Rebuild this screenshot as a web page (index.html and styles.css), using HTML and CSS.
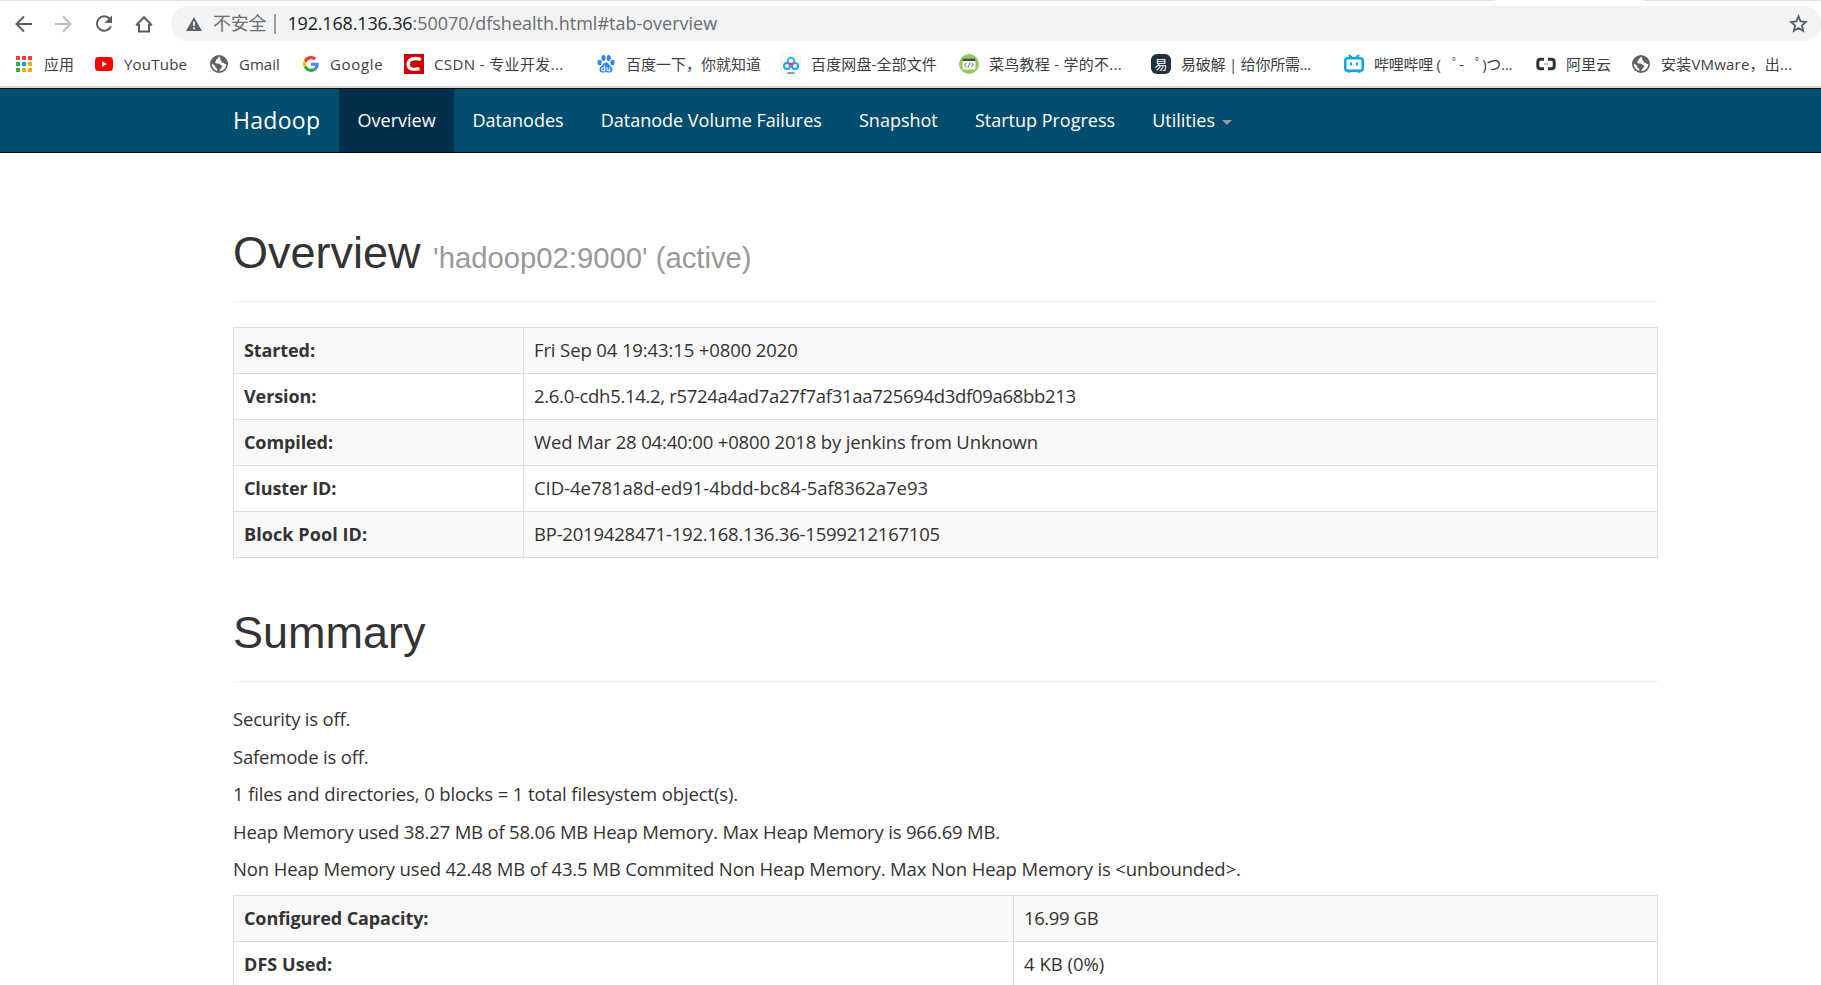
FILE: index.html
```html
<!DOCTYPE html>
<html lang="zh-CN">
<head>
<meta charset="utf-8">
<title>Namenode information</title>
<link rel="stylesheet" href="styles.css">
</head>
<body>
<header class="browser">
  <div class="tab-edge"><i class="edge-left"></i><i class="edge-right"></i></div>
  <div class="toolbar">
    <div class="controls">
      <svg width="20" height="20" viewBox="0 0 20 20"><path d="M18 10H2.500M10 2.500 2.500 10l7.500 7.500" fill="none" stroke="#5a5d61" stroke-width="2"/></svg>
      <svg width="20" height="20" viewBox="0 0 20 20"><path d="M1 10h15.500M9 2.500 16.500 10 9 17.500" fill="none" stroke="#b9bbbe" stroke-width="2"/></svg>
      <svg width="20" height="20" viewBox="0 0 20 20"><path d="M15.700 5A7.200 7.200 0 1 0 16.800 12.300" fill="none" stroke="#5a5d61" stroke-width="2"/><path d="M18 1.500V9h-7.500z" fill="#5a5d61"/></svg>
      <svg width="20" height="20" viewBox="0 0 20 20"><path d="M5 10v7.500h10V10M2.200 11.200 10 3.200l7.800 8M2 10.800h3M15 10.800h3" fill="none" stroke="#5a5d61" stroke-width="2"/></svg>
    </div>
    <div class="omnibox">
      <svg class="warn" width="16" height="14" viewBox="0 0 16 14"><path d="M8 0 16 14H0z" fill="#5f6368"/><path d="M8 4.500v4.500M8 10.300v1.900" stroke="#f1f3f4" stroke-width="1.800"/></svg>
      <span class="insecure">不安全</span><i class="sep"></i>
      <span class="url"><span class="host">192.168.136.36</span>:50070/dfshealth.html#tab-overview</span>
      <svg class="star" width="19" height="19" viewBox="0 0 20 20"><path d="m10 2.500 2.200 5.300 5.700.500-4.300 3.800 1.300 5.600-4.900-3-4.900 3 1.300-5.600-4.300-3.800 5.700-.500z" fill="none" stroke="#5a5d61" stroke-width="1.900"/></svg>
    </div>
  </div>
  <nav class="bookmarks">
    <a><svg width="18" height="18" viewBox="0 0 18 18"><path d="M1 1h4v4H1zM7 1h4v4H7zM13 1h4v4h-4z" fill="#f44336"/><path d="M1 7h4v4H1zM1 13h4v4H1z" fill="#34a853"/><path d="M7 7h4v4H7z" fill="#2196f3"/><path d="M7 13h4v4H7zM13 7h4v4h-4zM13 13h4v4h-4z" fill="#fba900"/></svg><span>应用</span></a>
    <a><svg width="18" height="18" viewBox="0 0 18 18"><rect y="2" width="18" height="14" rx="3.500" fill="#f00"/><path d="m7 6 5 3-5 3z" fill="#fff"/></svg><span class="yt">YouTube</span></a>
    <a><svg width="18" height="18" viewBox="0 0 18 18"><circle cx="9" cy="9" r="9" fill="#5f6368"/><path d="M9.500 1.800c-1.700.700-1.400 1.900-2.700 2.500-.900.500-.500 1.600-1.200 2.200-.800.600-.300 1.900.900 2 1.500.100 2.700-.200 3.400.800.600.900 2.300.600 2.400 1.800.100 1.400-1.500 1.700-1.800 2.900-.200.900-.900 1.600-1.600 2.300 4.400-.200 7.400-3.400 7.300-7.300-.800.300-1.500.100-1.900-.600-.500-.900-1.500-.300-2.200-.900-.800-.700-.300-1.900-1.300-2.300-.900-.500-.400-2.200-1.300-3.400zM1.800 8.500c-.100 3.800 2.400 6.700 5.500 7.400.200-1.400-.100-2.300-1.300-2.800-1-.500-.300-2-1.300-2.700z" fill="#fff"/></svg><span>Gmail</span></a>
    <a><svg width="16" height="16" viewBox="0 0 48 48"><path fill="#ea4335" d="M24 9.500c3.500 0 6.700 1.200 9.200 3.600l6.900-6.900C35.900 2.400 30.500 0 24 0 14.600 0 6.500 5.400 2.600 13.200l8 6.200C12.400 13.700 17.700 9.500 24 9.500z"/><path fill="#4285f4" d="M47 24.500c0-1.600-.200-3.100-.400-4.500H24v9h12.900c-.600 3-2.300 5.500-4.800 7.200l7.700 6C44.400 38 47 31.800 47 24.500z"/><path fill="#fbbc05" d="M10.500 28.600c-.500-1.500-.800-3-.800-4.600s.300-3.100.800-4.600l-8-6.200C.900 16.500 0 20.100 0 24s.9 7.500 2.600 10.800z"/><path fill="#34a853" d="M24 48c6.500 0 11.900-2.100 15.900-5.800l-7.700-6c-2.200 1.500-4.900 2.300-8.200 2.300-6.300 0-11.600-4.200-13.500-9.900l-8 6.200C6.500 42.600 14.600 48 24 48z"/></svg><span class="gg">Google</span></a>
    <a><svg width="20" height="20" viewBox="0 0 20 20"><path d="M0 0h20v20H0z" fill="#c00"/><path d="M17 5.500C11 3.500 4.500 4.500 4.200 10.200 4 15.500 9.500 16.200 15.500 14.700" fill="none" stroke="#fff" stroke-width="3.400"/></svg><span class="csdn">CSDN - 专业开发...</span></a>
    <a><svg width="18" height="18" viewBox="0 0 18 18" fill="#2f86f6"><ellipse cx="6.500" cy="3" rx="2.100" ry="2.900"/><ellipse cx="11.700" cy="3" rx="2.100" ry="2.900"/><ellipse cx="2.600" cy="7.500" rx="2.100" ry="2.700"/><ellipse cx="15.500" cy="7.500" rx="2.100" ry="2.700"/><path d="M9 7.500c2 0 2.600 1.700 4 3s2.700 2.300 2.500 4.200c-.200 2.100-1.900 3-3.700 2.800-1.900-.300-3.700-.300-5.600 0-1.800.200-3.500-.700-3.700-2.800-.200-1.900 1.100-2.900 2.500-4.200s2-3 4-3z"/><path d="M7.700 10.500v5.200H6.200a1.300 1.300 0 0 1 0-2.900h1.500M10 12.300v2.200q0 1.200 1.200 1.200h1.500v-3.400" fill="none" stroke="#fff" stroke-width="1.100"/></svg><span>百度一下，你就知道</span></a>
    <a><svg width="20" height="20" viewBox="0 0 20 20"><rect x=".5" y=".5" width="19" height="19" rx="2" fill="#fff" stroke="#f1f1f3"/><g fill="none" stroke-width="2"><circle cx="6" cy="12" r="3" stroke="#06a7ff"/><circle cx="14" cy="12" r="3" stroke="#06a7ff"/><circle cx="10" cy="7" r="3.300" stroke="#27b4fb"/><path d="M7 8.500q.600 2 3 1.800 2.400.200 3-1.800M8 11l2-1.500 2 1.500" stroke="#f0455d"/></g><path d="M6.500 19H10" stroke="#f0455d" stroke-width="1.600"/><path d="M10 19h3.500" stroke="#06a7ff" stroke-width="1.600"/></svg><span class="pan">百度网盘-全部文件</span></a>
    <a><svg width="20" height="20" viewBox="0 0 20 20"><circle cx="10" cy="10" r="10" fill="#96c853"/><path d="M3.500 4.500h13v11h-13z" fill="#f3f5ea"/><path d="M3.500 4.500h13V7h-13z" fill="#3c4e56"/><path d="m7.500 9-2 2 2 2M12.500 9l2 2-2 2M11 8.500l-2 5" fill="none" stroke="#6f7a78"/></svg><span class="cn">菜鸟教程 - 学的不...</span></a>
    <a><svg width="20" height="20" viewBox="0 0 20 20"><rect width="20" height="20" rx="6" fill="#203040"/><text x="10" y="14.800" text-anchor="middle" class="yi">易</text></svg><span class="po">易破解 | 给你所需...</span></a>
    <a><svg width="20" height="20" viewBox="0 0 20 20" fill="none" stroke="#0ba5e0"><rect x="1.300" y="4.300" width="17.400" height="12.400" rx="2.500" stroke-width="2.500"/><path d="m5 1 3 3M15 1l-3 3" stroke-width="2.200"/><path d="M7 8.500v3M13 8.500v3" stroke-width="2"/><path d="M3.500 17.500h3M13.500 17.500h3" stroke-width="2.500"/></svg><span class="bili">哔哩哔哩 ( <span class="ring">ﾟ</span>- <span class="ring">ﾟ</span>)つ...</span></a>
    <a><svg width="20" height="20" viewBox="0 0 20 20"><path d="M8 5.200H4.500Q1.800 5.200 1.800 8v4q0 2.800 2.700 2.800H8M12 5.200h3.500q2.700 0 2.700 2.800v4q0 2.800-2.700 2.800H12" fill="none" stroke="#333" stroke-width="3"/><path d="M8 10h4" stroke="#aaa" stroke-width="1.500"/></svg><span>阿里云</span></a>
    <a><svg width="18" height="18" viewBox="0 0 18 18"><circle cx="9" cy="9" r="9" fill="#5f6368"/><path d="M9.500 1.800c-1.700.700-1.400 1.900-2.700 2.500-.900.500-.500 1.600-1.200 2.200-.800.600-.300 1.900.900 2 1.500.100 2.700-.200 3.400.800.600.900 2.300.600 2.400 1.800.100 1.400-1.500 1.700-1.800 2.900-.200.900-.900 1.600-1.600 2.300 4.400-.200 7.400-3.400 7.300-7.300-.800.300-1.500.100-1.900-.600-.500-.900-1.500-.300-2.200-.900-.800-.700-.300-1.900-1.300-2.300-.900-.500-.400-2.200-1.300-3.400zM1.800 8.500c-.100 3.800 2.400 6.700 5.500 7.400.200-1.400-.100-2.300-1.300-2.800-1-.500-.300-2-1.300-2.700z" fill="#fff"/></svg><span class="vm">安装VMware，出...</span></a>
  </nav>
</header>
<nav class="navbar">
  <a class="brand">Hadoop</a>
  <a class="active">Overview</a>
  <a>Datanodes</a>
  <a>Datanode Volume Failures</a>
  <a>Snapshot</a>
  <a>Startup Progress</a>
  <a>Utilities<i class="caret"></i></a>
</nav>
<main class="container">
  <h1>Overview <small>'hadoop02:9000' (active)</small></h1>
  <table class="info">
    <tr><th>Started:</th><td class="started">Fri Sep 04 19:43:15 +0800 2020</td></tr>
    <tr><th>Version:</th><td class="version">2.6.0-cdh5.14.2, r5724a4ad7a27f7af31aa725694d3df09a68bb213</td></tr>
    <tr><th>Compiled:</th><td class="compiled">Wed Mar 28 04:40:00 +0800 2018 by jenkins from Unknown</td></tr>
    <tr><th>Cluster ID:</th><td class="cluster">CID-4e781a8d-ed91-4bdd-bc84-5af8362a7e93</td></tr>
    <tr><th class="wide">Block Pool ID:</th><td class="pool">BP-2019428471-192.168.136.36-1599212167105</td></tr>
  </table>
  <h1>Summary</h1>
  <section class="facts">
    <p class="status">Security is off.</p>
    <p class="status">Safemode is off.</p>
    <p class="files">1 files and directories, 0 blocks = 1 total filesystem object(s).</p>
    <p class="heap">Heap Memory used 38.27 MB of 58.06 MB Heap Memory. Max Heap Memory is 966.69 MB.</p>
    <p class="nonheap">Non Heap Memory used 42.48 MB of 43.5 MB Commited Non Heap Memory. Max Non Heap Memory is &lt;unbounded&gt;.</p>
  </section>
  <table class="capacity">
    <tr><th>Configured Capacity:</th><td class="total">16.99 GB</td></tr>
    <tr><th class="wide">DFS Used:</th><td>4 KB (0%)</td></tr>
  </table>
</main>
</body>
</html>
```
FILE: styles.css
```css
* { box-sizing: border-box; }
body {
  margin: 0;
  height: 985px;
  overflow: hidden;
  background: #fff;
  color: #333;
  font: 18.5px/25px "Open Sans", "Noto Sans CJK SC", sans-serif;
}
svg { flex: none; display: block; }

/* Browser chrome */
.browser { height: 88px; border-bottom: 2px solid #d5d7da; }
.tab-edge { display: flex; justify-content: space-between; height: 6px; }
.tab-edge i { height: 1px; background: #dee1e6; }
.edge-left { width: 1495px; }
.edge-right { width: 178px; }
.toolbar { display: flex; height: 35px; }
.controls { width: 171px; display: flex; gap: 20px; padding: 8px 14px; }
.omnibox {
  flex: 1;
  display: flex;
  align-items: center;
  padding: 0 13px 0 15px;
  border-radius: 18px;
  background: #f1f3f4;
  font-size: 18px;
  color: #6a6d71;
  white-space: nowrap;
}
.insecure { margin-left: 11px; letter-spacing: -.2px; }
.sep { width: 2px; height: 20px; margin: 0 11px 0 8px; background: #9a9da1; }
.host { color: #202124; letter-spacing: -.17px; }
.star { margin-left: auto; }
.bookmarks {
  display: grid;
  grid-template-columns: 80px 115px 93px 101px 193px 184px 178px 192px 193px 192px 96px 1fr;
  padding: 10px 0 0 15px;
  font-size: 15px;
  color: #3c4043;
  white-space: nowrap;
}
.bookmarks a { display: flex; align-items: center; gap: 11px; }
.bookmarks a > span { padding-top: 1px; }
.bookmarks svg[width="20"] { margin-right: -1px; }
.yt { letter-spacing: .22px; }
.gg { letter-spacing: .65px; }
.csdn { letter-spacing: .38px; }
.pan { letter-spacing: .13px; }
.cn { letter-spacing: .27px; }
.po { letter-spacing: -.22px; }
.bili { letter-spacing: -.26px; }
.ring { padding-left: 7.5px; }
.vm { letter-spacing: .2px; }
.yi { font: 13px "Noto Sans CJK SC", sans-serif; fill: #fff; }

/* Site navigation */
.navbar {
  display: flex;
  height: 65px;
  padding-left: 233px;
  border: solid #080808;
  border-width: 1px 0;
  background: #004d6e;
  color: #fff;
  font-size: 18px;
}
.navbar a { padding: 19px 18.55px 0; }
.navbar .brand { width: 106px; padding: 19px 0 0; font-size: 23px; letter-spacing: .3px; }
.navbar .active { width: 115px; background: #002e4b; }
.caret {
  display: inline-block;
  margin-left: 7px;
  vertical-align: middle;
  border: 5px solid transparent;
  border-top-color: #999;
  border-bottom: 0;
}

/* Page content */
.container { width: 1425px; margin-left: 233px; padding-top: 75px; }
h1 {
  height: 74px;
  margin: 0 0 25px;
  border-bottom: 1px solid #eee;
  font: 45px/49.5px "Liberation Sans", sans-serif;
}
small { color: #999; font-size: 65%; }
table { width: 100%; border-collapse: collapse; table-layout: fixed; }
th, td { height: 46px; padding: 10px; border: 1px solid #ddd; text-align: left; line-height: 25px; }
td { padding: 9px 10px 11px; }
th { font-size: 18px; font-weight: 700; letter-spacing: -.1px; }
th.wide { letter-spacing: .08px; }
tr:nth-child(odd) { background: #f9f9f9; }
.info { margin-bottom: 50px; }
.info th { width: 290px; }
.capacity th { width: 780px; }
.facts { margin-top: -1px; padding-bottom: 1px; }
p { margin: 0 0 12.5px; }
.started { letter-spacing: -.12px; }
.version { letter-spacing: -.31px; }
.compiled { letter-spacing: -.155px; }
.cluster { letter-spacing: -.035px; }
.pool { letter-spacing: -.22px; }
.status { letter-spacing: -.2px; }
.files { letter-spacing: -.125px; }
.heap { letter-spacing: -.19px; }
.nonheap { letter-spacing: -.13px; }
.total { letter-spacing: -.4px; }
```
